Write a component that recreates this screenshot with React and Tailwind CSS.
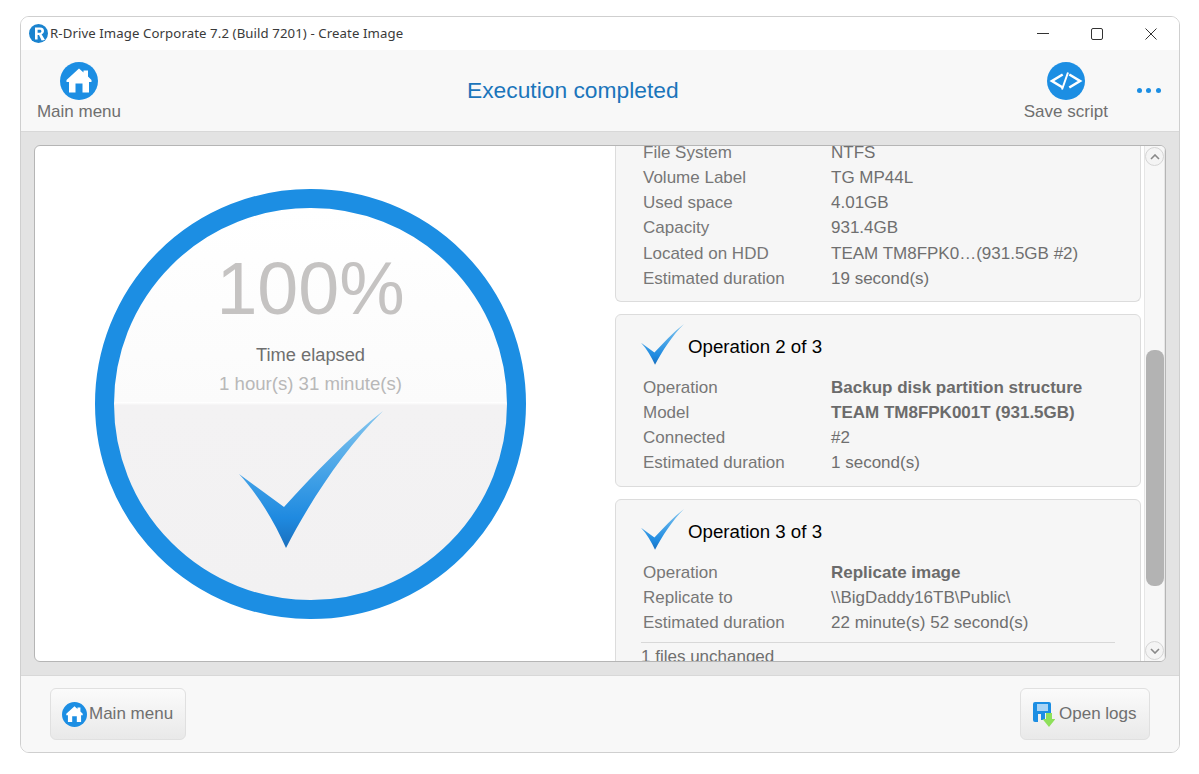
import React from "react";

function HomeBadge({ size = 38 }) {
  return (
    <svg width={size} height={size} viewBox="0 0 38 38" className="shrink-0 block">
      <circle cx="19" cy="19" r="19" fill="#1c8ee3" />
      <path d="M19 6.5 L23.5 10.5 V8.5 H28 V14.5 L31.5 18 V20 H29 V30.5 H22.5 V21.5 H15.5 V30.5 H9 V20 H6.5 V18 Z" fill="#fff" />
    </svg>
  );
}

function CheckMark({ w, h, id, className = "" }) {
  return (
    <svg width={w} height={h} viewBox="0 0 144 138" className={`block shrink-0 ${className}`}>
      <defs>
        <linearGradient id={id} x1="0.5" y1="0" x2="0.5" y2="1">
          <stop offset="0" stopColor="#85c6ee" />
          <stop offset="0.5" stopColor="#3f9fe6" />
          <stop offset="0.78" stopColor="#1f8ae0" />
          <stop offset="1" stopColor="#1a6fbd" />
        </linearGradient>
      </defs>
      <path d="M144 0 C108 28 75 63 45 96 L0 63 C20 85 35 110 47 137 C70 92 105 38 144 0 Z" fill={`url(#${id})`} />
    </svg>
  );
}

function Row({ label, value, bold }) {
  return (
    <div className="flex h-[25.2px] items-center">
      <span className="w-[188px] shrink-0 text-[#777777]">{label}</span>
      <span className={bold ? "font-bold text-[#6b6b6b]" : "text-[#6f6f6f]"}>{value}</span>
    </div>
  );
}

function OpHead({ n, id }) {
  return (
    <div className="flex h-[51px] items-start ml-[-2px]">
      <CheckMark w={43} h={43} id={id} className="mt-[-1px]" />
      <span className="ml-[4px] mt-[10px] text-[18.7px] leading-[26px] text-black">Operation {n} of 3</span>
    </div>
  );
}

export default function App() {
  return (
    <div className="h-[774px] w-[1199px] bg-white pl-[20px] pt-[16px] font-['Liberation_Sans',Arial,sans-serif] text-[17px] overflow-hidden">
      <div className="flex h-[737px] w-[1160px] flex-col overflow-hidden rounded-[9px] border border-[#cfcfcf] bg-white">
        {/* Title bar */}
        <div className="flex h-[33px] shrink-0 items-center bg-white pl-[8px]">
          <svg width="19" height="19" viewBox="0 0 19 19" className="block shrink-0">
            <circle cx="9.5" cy="9.5" r="9.5" fill="#1a83cf" />
            <path d="M6 3.5 H11 C14 3.5 15 5.3 15 7 C15 8.6 14 9.8 12.6 10.2 L16 16 L12.6 16.6 L10 10.9 H8.6 V15.5 H6 Z M8.6 5.7 V8.8 H10.8 C11.9 8.8 12.4 8 12.4 7.2 C12.4 6.3 11.8 5.7 10.8 5.7 Z" fill="#fff" />
          </svg>
          <span className="ml-[2px] font-['Noto_Sans',sans-serif] text-[13.2px] tracking-[0.1px] text-[#3a3a3a]">R-Drive Image Corporate 7.2 (Build 7201) - Create Image</span>
          <div className="ml-auto flex items-center">
            <div className="flex w-[56px] justify-center"><div className="h-px w-[12px] bg-[#333]" /></div>
            <div className="flex w-[52px] justify-center"><div className="h-[12px] w-[12px] rounded-[2px] border border-[#333]" /></div>
            <div className="flex w-[56px] justify-center">
              <svg width="12" height="12" viewBox="0 0 12 12"><path d="M0.5 0.5 L11.5 11.5 M11.5 0.5 L0.5 11.5" stroke="#333" strokeWidth="1" fill="none" /></svg>
            </div>
          </div>
        </div>

        {/* Toolbar */}
        <div className="flex h-[82px] shrink-0 items-start border-b border-[#d8d8d8] bg-[#f8f8f8]">
          <div className="flex w-[116px] flex-col items-center pt-[12px]">
            <HomeBadge />
            <span className="mt-[2px] leading-[20px] text-[#6f6f6f]">Main menu</span>
          </div>
          <div className="flex-1 pl-[330px] pt-[25px] text-[22.8px] leading-[30px] text-[#1b75bb]">Execution completed</div>
          <div className="flex w-[100px] flex-col items-center pt-[12px]">
            <svg width="38" height="38" viewBox="0 0 38 38" className="block">
              <circle cx="19" cy="19" r="19" fill="#1c8ee3" />
              <path d="M15.7 12.5 L5 19 L15.7 25.5 M22.3 12.5 L33 19 L22.3 25.5" stroke="#fff" strokeWidth="2.6" fill="none" />
              <path d="M21 10.5 L15 27.5" stroke="#fff" strokeWidth="2" fill="none" />
            </svg>
            <span className="mt-[2px] leading-[20px] text-[#6f6f6f]">Save script</span>
          </div>
          <div className="ml-[21px] mr-[18px] mt-[38px] flex gap-[4.6px]">
            <span className="h-[5px] w-[5px] rounded-full bg-[#1c8ee3]" />
            <span className="h-[5px] w-[5px] rounded-full bg-[#1c8ee3]" />
            <span className="h-[5px] w-[5px] rounded-full bg-[#1c8ee3]" />
          </div>
        </div>

        {/* Middle */}
        <div className="flex h-[544px] shrink-0 border-b border-[#d8d8d8] bg-[#e3e3e3] px-[13px] pt-[13px]">
          <div className="flex h-[517px] w-[1132px] overflow-hidden rounded-[6px] border border-[#b5b5b5] bg-white">
            {/* Gauge */}
            <div className="flex w-[580px] shrink-0 justify-center pt-[43px]">
              <div className="ml-[-29px] flex h-[430px] w-[431px] flex-col items-center rounded-full border-[19px] border-[#1c8ee3] bg-[linear-gradient(to_bottom,#ffffff_0,#fbfbfb_49.6%,#ffffff_49.6%,#f3f2f3_50.3%,#f2f1f2_100%)]">
                <span className="mt-[36px] text-[73.6px] leading-[90px] text-[#c5c3c2]">100%</span>
                <span className="mt-[9px] text-[18.3px] leading-[24px] text-[#6f6f6f]">Time elapsed</span>
                <span className="mt-[5px] text-[18.6px] leading-[24px] text-[#b8b8b8]">1 hour(s) 31 minute(s)</span>
                <div className="ml-[1px] mt-[15px]">
                  <CheckMark w={144} h={138} id="big" />
                </div>
              </div>
            </div>

            {/* Cards */}
            <div className="w-[526px] shrink-0 overflow-hidden">
              <div className="flex flex-col gap-[12px] mt-[-7px]">
                <div className="h-[163px] rounded-b-[6px] border border-t-0 border-[#dcdcdc] bg-[#f6f6f6] px-[27px] pt-[1px]">
                  <Row label="File System" value="NTFS" />
                  <Row label="Volume Label" value="TG MP44L" />
                  <Row label="Used space" value="4.01GB" />
                  <Row label="Capacity" value="931.4GB" />
                  <Row label="Located on HDD" value="TEAM TM8FPK0…(931.5GB #2)" />
                  <Row label="Estimated duration" value="19 second(s)" />
                </div>
                <div className="h-[173px] rounded-[6px] border border-[#dcdcdc] bg-[#f6f6f6] px-[27px] pt-[9px]">
                  <OpHead n={2} id="c2" />
                  <Row label="Operation" value="Backup disk partition structure" bold />
                  <Row label="Model" value="TEAM TM8FPK001T (931.5GB)" bold />
                  <Row label="Connected" value="#2" />
                  <Row label="Estimated duration" value="1 second(s)" />
                </div>
                <div className="h-[190px] rounded-t-[6px] border border-[#dcdcdc] bg-[#f6f6f6] px-[27px] pt-[9px]">
                  <OpHead n={3} id="c3" />
                  <Row label="Operation" value="Replicate image" bold />
                  <Row label="Replicate to" value="\\BigDaddy16TB\Public\" />
                  <Row label="Estimated duration" value="22 minute(s) 52 second(s)" />
                  <div className="ml-[-2px] mr-[-2px] mt-[6px] border-t border-[#d8d8d8] pt-[4px] leading-[20px] text-[#6f6f6f]">1 files unchanged</div>
                </div>
              </div>
            </div>

            {/* Scrollbar */}
            <div className="ml-[3px] flex w-[22px] flex-col items-center border-x border-[#e6e6e6] bg-[#f7f7f7]">
              <div className="mt-[1px] flex h-[19px] w-[19px] shrink-0 items-center justify-center rounded-full border border-[#d4d4d4] bg-[#f4f4f4]">
                <svg width="10" height="6" viewBox="0 0 10 6"><path d="M1 5 L5 1 L9 5" stroke="#888" strokeWidth="1.6" fill="none" /></svg>
              </div>
              <div className="mt-[184px] h-[236px] w-[18px] shrink-0 rounded-[8px] bg-[#b3b3b3]" />
              <div className="mt-[55px] flex h-[19px] w-[19px] shrink-0 items-center justify-center rounded-full border border-[#d4d4d4] bg-[#f4f4f4]">
                <svg width="10" height="6" viewBox="0 0 10 6"><path d="M1 1 L5 5 L9 1" stroke="#888" strokeWidth="1.6" fill="none" /></svg>
              </div>
            </div>
          </div>
        </div>

        {/* Footer */}
        <div className="flex flex-1 items-start justify-between bg-[#f8f8f8] px-[29px] pt-[12px]">
          <button className="flex h-[52px] w-[136px] items-center rounded-[6px] border border-[#e0e0e0] bg-[linear-gradient(to_bottom,#fbfbfb,#e9e9e9)] pl-[11px]">
            <HomeBadge size={25} />
            <span className="ml-[2px] text-[#6f6f6f]">Main menu</span>
          </button>
          <button className="flex h-[52px] w-[130px] items-center rounded-[6px] border border-[#e0e0e0] bg-[linear-gradient(to_bottom,#fbfbfb,#e9e9e9)] pl-[12px]">
            <svg width="22" height="25" viewBox="0 0 22 25" className="block shrink-0">
              <path d="M2 0 H16 Q18 0 18 2 V11 H12 V18 H8 V12 H5 V20 H2 Q0 20 0 18 V2 Q0 0 2 0 Z" fill="#1c8ee3" />
              <rect x="4" y="2" width="11" height="7" fill="#a9d4f5" />
              <path d="M13 11 H19 V17 H22.5 L16 25 L9.5 17 H13 Z" fill="#8ee05a" />
            </svg>
            <span className="ml-[4px] text-[#6f6f6f]">Open logs</span>
          </button>
        </div>
      </div>
    </div>
  );
}
